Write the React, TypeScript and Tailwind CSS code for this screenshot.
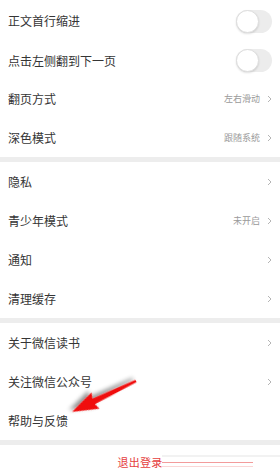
import React from "react";

const Chevron = () => (
  <svg width="5" height="8" viewBox="0 0 5 8" className="shrink-0">
    <polyline points="1,1 4,4 1,7" fill="none" stroke="#b5b5b5" strokeWidth="1" />
  </svg>
);

const Toggle = () => (
  <div className="relative w-[36px] h-[23px] rounded-full bg-[#ececec]">
    <div className="absolute left-0 top-0 w-[23px] h-[23px] rounded-full bg-white border border-[#dedede] shadow-[0_1px_2px_rgba(0,0,0,0.12)]" />
  </div>
);

type RowProps = { label: string; value?: string; chevron?: boolean; toggle?: boolean; h: string };

const Row = ({ label, value, chevron, toggle, h }: RowProps) => (
  <div className={`flex items-center justify-between pl-[8px] pr-[8px] ${h}`}>
    <span className="text-[12px] text-[#353535] leading-[16px]">{label}</span>
    {toggle ? (
      <Toggle />
    ) : (
      <div className="flex items-center gap-[7px]">
        {value && <span className="text-[9px] text-[#9a9a9a]">{value}</span>}
        {chevron && <Chevron />}
      </div>
    )}
  </div>
);

const Divider = () => <div className="h-[5px] bg-[#ededed]" />;

export default function App() {
  return (
    <div
      className="relative w-[280px] h-[470px] overflow-hidden bg-white"
      style={{ fontFamily: '"Noto Sans CJK SC", "Noto Sans", sans-serif' }}
    >
      <div className="pt-[1px]">
        <Row label="正文首行缩进" toggle h="h-[40px]" />
        <Row label="点击左侧翻到下一页" toggle h="h-[39px]" />
        <Row label="翻页方式" value="左右滑动" chevron h="h-[38px]" />
        <Row label="深色模式" value="跟随系统" chevron h="h-[39px]" />
      </div>
      <Divider />
      <Row label="隐私" chevron h="h-[39px]" />
      <Row label="青少年模式" value="未开启" chevron h="h-[39px]" />
      <Row label="通知" chevron h="h-[39px]" />
      <Row label="清理缓存" chevron h="h-[39px]" />
      <Divider />
      <Row label="关于微信读书" chevron h="h-[39px]" />
      <Row label="关注微信公众号" chevron h="h-[39px]" />
      <Row label="帮助与反馈" h="h-[39px]" />
      <Divider />
      <div className="flex justify-center pt-[10px]">
        <span className="text-[11px] leading-[14px] text-[#e53e3e] tracking-[0.2px]">退出登录</span>
      </div>

      {/* artifact lines */}
      <div className="absolute left-[162px] top-[455px] w-[118px] h-[2px] bg-[#f2f2f2]" />
      <div className="absolute left-[162px] top-[462px] w-[91px] h-[1px] bg-[#f39b9b]" />
      <div className="absolute left-[162px] top-[466px] w-[91px] h-[1px] bg-[#fbd6d6]" />

      {/* red arrow annotation */}
      <svg className="absolute left-0 top-0 pointer-events-none" width="280" height="470">
        <defs>
          <filter id="sh" x="-50%" y="-50%" width="200%" height="200%">
            <feDropShadow dx="2" dy="3" stdDeviation="2" floodColor="#000" floodOpacity="0.45" />
          </filter>
        </defs>
        <g transform="translate(136 381) rotate(154.2)" filter="url(#sh)">
          <polygon points="0,-1.2 47,-3 45,-9 71,0 45,9 47,3 0,1.2" fill="#f01010" />
        </g>
      </svg>
    </div>
  );
}
